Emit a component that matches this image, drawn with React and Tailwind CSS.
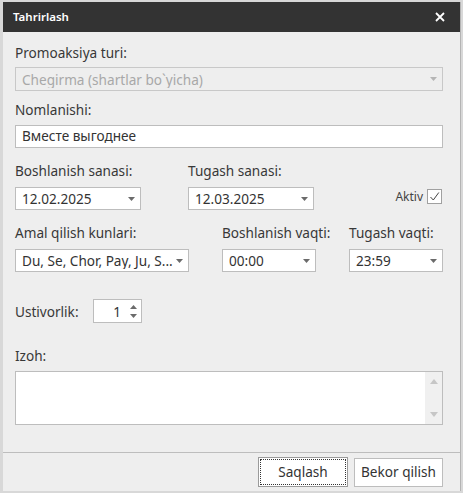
import React from "react";

const font = { fontFamily: '"Noto Sans", "Open Sans", sans-serif' };

const Arrow = ({ color = "#6b6b6b" }) => (
  <svg width="7" height="4" viewBox="0 0 7 4" className="shrink-0">
    <path d="M0 0h7L3.5 4z" fill={color} />
  </svg>
);

const Combo = ({ value, className = "", disabled }) => (
  <div
    className={`flex items-center justify-between border pl-[6px] pr-[5px] ${
      disabled ? "border-[#c8c8c8] bg-[#eeeeee] text-[#a8a8a8]" : "border-[#bdbdbd] bg-white text-[#333]"
    } ${className}`}
  >
    <span className="truncate whitespace-nowrap leading-[17px]">{value}</span>
    <Arrow color={disabled ? "#b5b5b5" : "#6b6b6b"} />
  </div>
);

const Label = ({ children, className = "" }) => (
  <div className={`h-[17px] leading-[17px] whitespace-nowrap text-[#383838] ${className}`}>{children}</div>
);

export default function App() {
  return (
    <div className="w-[463px] h-[493px] overflow-hidden bg-[#d8d8d8] pt-[2px] pl-[3px] text-[13.6px]" style={font}>
      <div className="w-[458px] h-[489px] flex flex-col border-r border-[#b4b4b4] bg-[#eeeeee]">
        <div className="h-[30px] shrink-0 bg-[#333333] flex items-center justify-between pl-[10px] pr-[15px]">
          <span className="text-white font-semibold text-[11.5px]">Tahrirlash</span>
          <svg width="10" height="10" viewBox="0 0 10 10">
            <path d="M1 1l8 8M9 1l-8 8" stroke="#fff" strokeWidth="1.8" />
          </svg>
        </div>

        <div className="flex-1 flex flex-col pl-[12px] pr-[17px]">
          <Label className="mt-[12px]">Promoaksiya turi:</Label>
          <Combo disabled value="Chegirma (shartlar bo`yicha)" className="mt-[6px] h-[24px]" />

          <Label className="mt-[10px]">Nomlanishi:</Label>
          <div className="mt-[7px] h-[23px] border border-[#bdbdbd] bg-white pl-[6px] flex items-center text-[#333]">
            Вместе выгоднее
          </div>

          <div className="mt-[14px] flex">
            <div className="w-[126px] flex flex-col">
              <Label>Boshlanish sanasi:</Label>
              <Combo value="12.02.2025" className="mt-[8px] h-[23px]" />
            </div>
            <div className="ml-[47px] w-[126px] flex flex-col">
              <Label>Tugash sanasi:</Label>
              <Combo value="12.03.2025" className="mt-[8px] h-[23px]" />
            </div>
            <div className="ml-auto mt-[27px] mr-[1px] flex items-center gap-[4px] self-start">
              <span className="text-[12px] text-[#444] leading-[14px]">Aktiv</span>
              <div className="w-[15px] h-[15px] border border-[#a0a0a0] bg-white flex items-center justify-center">
                <svg width="11" height="11" viewBox="0 0 11 11">
                  <path d="M1.5 6l2.8 3L9.8 1.5" stroke="#444" strokeWidth="1" fill="none" />
                </svg>
              </div>
            </div>
          </div>

          <div className="mt-[14px] flex">
            <div className="w-[174px] flex flex-col">
              <Label>Amal qilish kunlari:</Label>
              <Combo value="Du, Se, Chor, Pay, Ju, S..." className="mt-[8px] h-[23px]" />
            </div>
            <div className="ml-[33px] w-[94px] flex flex-col">
              <Label>Boshlanish vaqti:</Label>
              <Combo value="00:00" className="mt-[8px] h-[23px]" />
            </div>
            <div className="ml-auto w-[94px] flex flex-col">
              <Label>Tugash vaqti:</Label>
              <Combo value="23:59" className="mt-[8px] h-[23px]" />
            </div>
          </div>

          <div className="mt-[27px] flex items-center">
            <Label className="w-[78px]">Ustivorlik:</Label>
            <div className="w-[49px] h-[24px] border border-[#bdbdbd] bg-white flex items-center justify-end pr-[4px] gap-[9px]">
              <span className="text-[#333] leading-[17px]">1</span>
              <div className="flex flex-col gap-[5px]">
                <svg width="7" height="4" viewBox="0 0 7 4">
                  <path d="M0 4h7L3.5 0z" fill="#6b6b6b" />
                </svg>
                <svg width="7" height="4" viewBox="0 0 7 4">
                  <path d="M0 0h7L3.5 4z" fill="#6b6b6b" />
                </svg>
              </div>
            </div>
          </div>

          <Label className="mt-[24px]">Izoh:</Label>
          <div className="mt-[7px] h-[54px] border border-[#bdbdbd] bg-white flex justify-end">
            <div className="w-[17px] bg-[#f0f0f0] flex flex-col items-center justify-between py-[7px]">
              <svg width="8" height="5" viewBox="0 0 8 5">
                <path d="M0 5h8L4 0z" fill="#c6c6c6" />
              </svg>
              <svg width="8" height="5" viewBox="0 0 8 5">
                <path d="M0 0h8L4 5z" fill="#c6c6c6" />
              </svg>
            </div>
          </div>
        </div>

        <div className="h-[39px] shrink-0 border-t border-[#bdbdbd] flex items-start justify-end gap-[6px] pt-[4px] pr-[17px]">
          <button className="w-[90px] h-[30px] border border-[#9a9a9a] bg-white p-[1px]">
            <span className="w-full h-full border border-dotted border-[#333] flex items-center justify-center text-[#333]">
              Saqlash
            </span>
          </button>
          <button className="w-[89px] h-[29px] mt-[1px] border border-[#bdbdbd] bg-white flex items-center justify-center text-[#333]">
            Bekor qilish
          </button>
        </div>
      </div>
    </div>
  );
}
